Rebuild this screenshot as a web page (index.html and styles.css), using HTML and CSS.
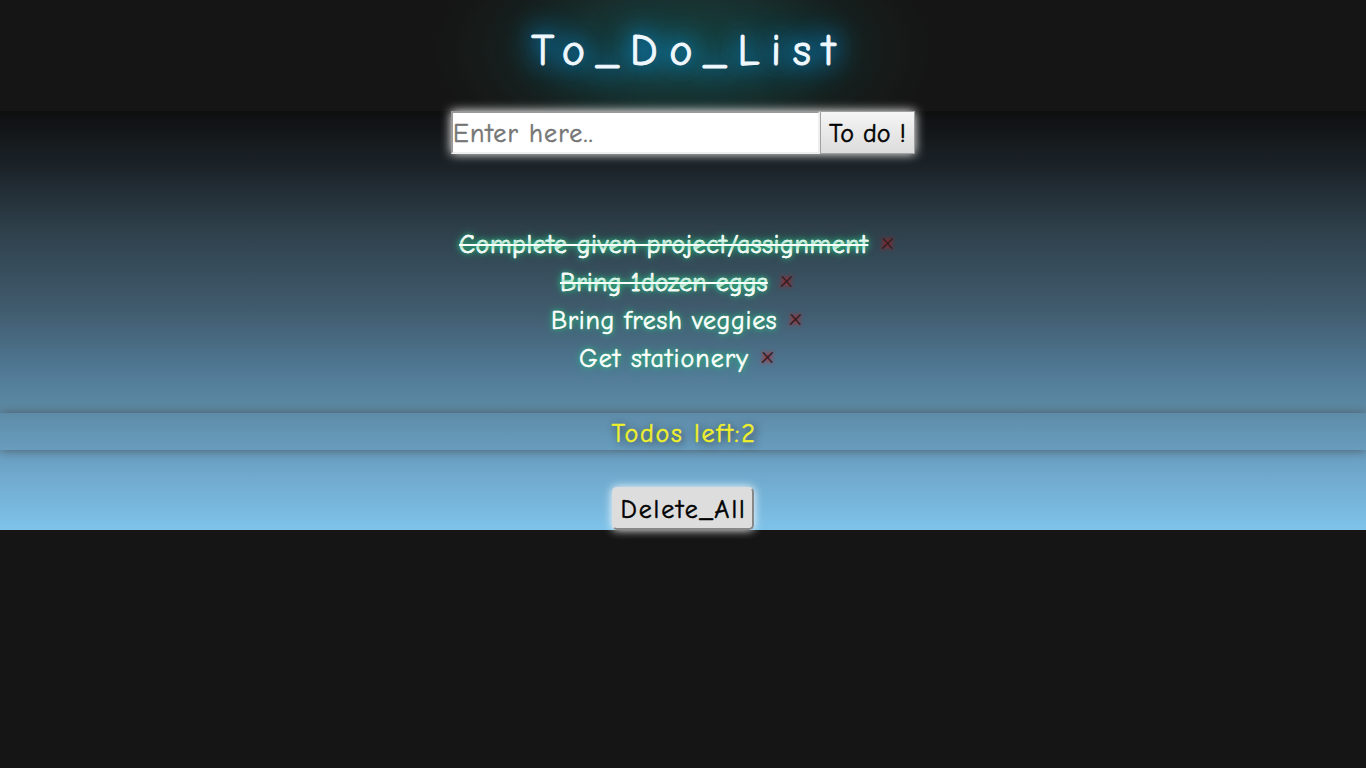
FILE: index.html
```html
<!DOCTYPE html>
<html lang="en">
<head>
<meta charset="utf-8">
<title>To_Do_List</title>
<link rel="stylesheet" href="styles.css">
</head>
<body>
<h1 class="title">To_Do_List</h1>
<main class="panel">
  <form class="entry">
    <input class="entry-input" type="text" placeholder="Enter here..">
    <button class="entry-button" type="button">To do !</button>
  </form>
  <ul class="todos">
    <li class="todo"><span class="todo-text done w1">Complete given project/assignment</span><span class="remove">x</span></li>
    <li class="todo"><span class="todo-text done w2">Bring 1dozen eggs</span><span class="remove">x</span></li>
    <li class="todo"><span class="todo-text w3">Bring fresh veggies</span><span class="remove">x</span></li>
    <li class="todo"><span class="todo-text w4">Get stationery</span><span class="remove">x</span></li>
  </ul>
  <div class="left"><span class="left-text">Todos left:2</span></div>
  <button class="delete" type="button">Delete_All</button>
</main>
</body>
</html>
```
FILE: styles.css
```css
* { box-sizing: border-box; }
html { background: #151515; }
body {
  margin: 0;
  min-height: 100vh;
  font-family: "Comic Sans MS", "Comic Neue", "Noto Sans", sans-serif;
  font-size: 26px;
  color: #fff;
  font-variant-ligatures: none;
  -webkit-text-stroke: 0.5px currentColor;
}
.title {
  margin: 0;
  height: 111px;
  padding-left: 12px;
  line-height: 102px;
  text-align: center;
  font-size: 44px;
  font-weight: 400;
  letter-spacing: 11.6px;
  color: aliceblue;
  -webkit-text-stroke: 1px aliceblue;
  background: radial-gradient(ellipse 250px 125px at 50% 50px, rgba(28, 95, 90, 0.62), rgba(28, 80, 78, 0.45) 45%, rgba(26, 52, 46, 0.3) 72%, rgba(21, 21, 21, 0));
  text-shadow: 0 0 20px #0a9cff, 0 0 30px #0aa0e8, 0 0 40px #0aa0e8;
}
.panel {
  height: 419px;
  display: flex;
  flex-direction: column;
  align-items: center;
  background: linear-gradient(#0e0f0f 0%, #1c242a 14%, #2e3f4a 28%, #415c6f 48%, #517b97 63%, #5d8aa5 71%, #689dbf 81%, #7fc3ea 100%);
}
.entry {
  display: flex;
  width: 464px;
  height: 43px;
  margin: 0;
  box-shadow: 0 0 10px #fff;
}
.entry-input {
  width: 369px;
  padding: 3px 0 0;
  border: 2px solid;
  border-color: #999 #eee #eee #999;
  border-radius: 0;
  background: #fff;
  font: inherit;
  letter-spacing: 1.2px;
}
.entry-input::placeholder { color: #757575; opacity: 1; }
.entry-button {
  width: 95px;
  padding: 3px 0 0;
  border: 1px solid #a0a0a0;
  background: linear-gradient(#f5f5f5, #dcdcdc);
  font: inherit;
  letter-spacing: 0.1px;
  color: #000;
}
.todos {
  list-style: none;
  margin: 71px 0 0;
  padding: 0;
  height: 188px;
}
.todo {
  display: flex;
  justify-content: center;
  height: 38px;
  line-height: 40px;
}
.todo-text {
  white-space: nowrap;
  text-shadow: 0 0 5px #2bc080, 0 0 10px #2bb07c;
}
.done { text-decoration: line-through 2px #fff; }
.w1 { width: 410px; letter-spacing: 0.62px; }
.w2 { width: 208px; letter-spacing: 0.2px; }
.w3 { width: 226px; letter-spacing: 0.68px; }
.w4 { width: 170px; letter-spacing: 1.05px; }
.remove {
  width: 38px;
  padding-left: 13px;
  line-height: 34px;
  font-size: 23px;
  color: #2b2024;
  text-shadow: 0 0 4px #f00;
  -webkit-text-stroke: 0;
}
.left {
  width: 100%;
  height: 37px;
  line-height: 42px;
  text-align: center;
  letter-spacing: 1.8px;
  padding-left: 2px;
  color: #f0f02c;
  text-shadow: 2px 2px 8px #222;
  box-shadow: 0 0 10px #4b5a62;
}
.delete {
  width: 142px;
  height: 43px;
  margin: 37px 1px 0 0;
  padding: 3px 0 0 2px;
  border: 2px solid;
  border-color: #ddd #888 #888 #ddd;
  border-radius: 5px;
  background: #ddd;
  box-shadow: 0 0 10px #fff;
  font: inherit;
  letter-spacing: 1.9px;
  color: #000;
}
```
